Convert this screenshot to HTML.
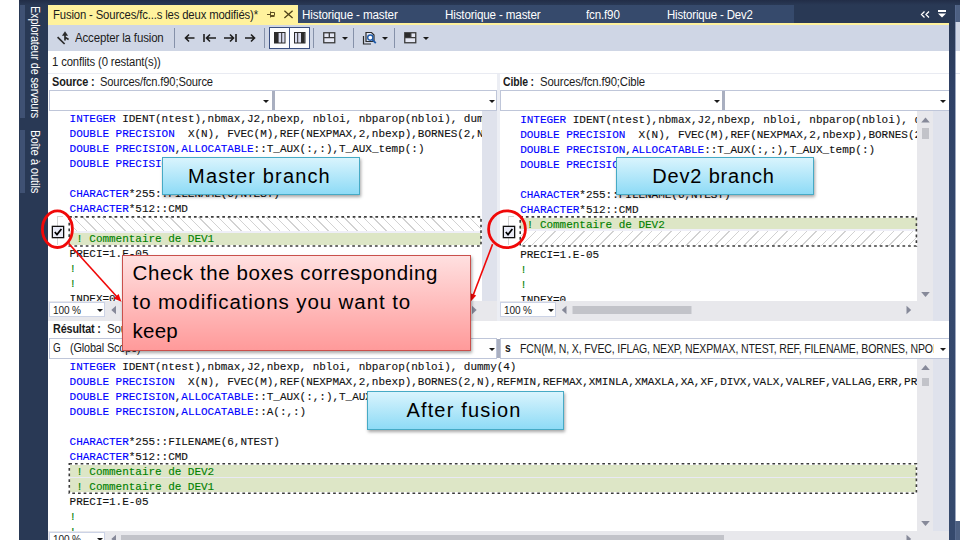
<!DOCTYPE html>
<html lang="fr">
<head>
<meta charset="utf-8">
<title>Fusion - Sources/fcn.f90</title>
<style>
*{box-sizing:border-box;margin:0;padding:0}
html,body{width:960px;height:540px;overflow:hidden;background:#fff}
body{position:relative;font-family:"Liberation Sans",sans-serif;font-size:11.5px;color:#1e1e1e}
.a{position:absolute}
.ui{position:absolute;white-space:nowrap;font-size:12px;line-height:14px;color:#1b1b1b}
.b{font-weight:bold}
.pane{position:absolute;overflow:hidden;background:#fff}
.cl{position:absolute;white-space:pre;font-family:"Liberation Mono",monospace;font-size:11px;line-height:15px;height:15px;letter-spacing:-0.03px;color:#111;-webkit-text-stroke:0.12px}
.cl b{font-weight:normal;color:#0000ff}
.cl i{font-style:normal;color:#008000}
.tabt{position:absolute;top:8px;white-space:nowrap;font-size:12px;line-height:14px;color:#fff}
.sep{position:absolute;top:28px;width:1px;height:20px;background:#8591a9}
.dd{position:absolute;width:0;height:0;border-left:3px solid transparent;border-right:3px solid transparent;border-top:3px solid #1b1b1b}
.sb{position:absolute;background:#e8e8ec}
.green{position:absolute;background:#dde6c6}
.note span{margin-left:-3px}
.note{position:absolute;display:flex;align-items:center;justify-content:center;font-size:20px;color:#000;border:1px solid #46aac5;background:linear-gradient(#d9f4fd,#8edbf6);box-shadow:1px 2px 3px rgba(0,0,0,.35);white-space:nowrap;padding-top:0.6px}
.vt{position:absolute;white-space:nowrap;color:#fff;font-size:12px;line-height:14px;transform-origin:0 0;transform:rotate(90deg)}
.rl{position:absolute;white-space:nowrap;font-size:20.5px;line-height:24px;color:#000}
</style>
</head>
<body>
<!-- left sidebar -->
<div class="a" style="left:19px;top:0;width:29px;height:540px;background:linear-gradient(#222d47 0,#293955 5px)"></div>
<div class="a" style="left:20px;top:5px;width:5px;height:113px;background:#3f5173"></div>
<div class="a" style="left:20px;top:130px;width:5px;height:63px;background:#3f5173"></div>
<div class="vt" style="letter-spacing:-0.150px;transform-origin:0 0;transform:rotate(90deg) scaleX(0.9035);left:42px;top:6px">Explorateur de serveurs</div>
<div class="vt" style="letter-spacing:-0.150px;transform-origin:0 0;transform:rotate(90deg) scaleX(0.9409);left:42px;top:130px">Boîte à outils</div>

<!-- tab strip -->
<div class="a" style="left:48px;top:0;width:901px;height:25px;background:linear-gradient(#222d47 0,#293955 5px)"></div>
<div class="a" style="left:949px;top:0;width:11px;height:5px;background:linear-gradient(#222d47 0,#293955 5px);z-index:1"></div>
<div class="a" style="left:298px;top:5px;width:496px;height:19px;background:#364a6c"></div>
<div class="a" style="left:48px;top:5px;width:250px;height:19px;background:#fff29d"></div>
<div class="a" style="left:48px;top:23px;width:901px;height:2px;background:#fff29d"></div>
<div class="tabt" style="letter-spacing:-0.150px;transform-origin:0 0;transform:scaleX(0.9419);left:52.5px;color:#1b1b1b">Fusion - Sources/fc...s les deux modifiés)*</div>
<svg class="a" style="left:266px;top:9px" width="30" height="12" viewBox="0 0 30 12">
 <g stroke="#5f5022" stroke-width="1" fill="none"><path d="M1 5.5H4.5M4.5 2.5V8.5M4.5 3.5H8.5V6.5H4.5M5 7.5H8.5"/></g>
 <path d="M18.4 1.8L26.6 9M26.6 1.8L18.4 9" stroke="#4f4218" stroke-width="1.3" fill="none"/>
</svg>
<div class="tabt" style="letter-spacing:-0.150px;transform-origin:0 0;transform:scaleX(0.9713);left:302.4px">Historique - master</div>
<div class="tabt" style="letter-spacing:-0.150px;transform-origin:0 0;transform:scaleX(0.9693);left:445px">Historique - master</div>
<div class="tabt" style="letter-spacing:-0.150px;transform-origin:0 0;transform:scaleX(0.9634);left:586.4px">fcn.f90</div>
<div class="tabt" style="letter-spacing:-0.150px;transform-origin:0 0;transform:scaleX(0.9506);left:666.6px">Historique - Dev2</div>
<svg class="a" style="left:918px;top:8px" width="32" height="12" viewBox="0 0 32 12">
 <path d="M6.5 3.5L3.5 6.5L6.5 9.5M11 3.5L8 6.5L11 9.5" stroke="#fff" stroke-width="1.3" fill="none"/>
 <path d="M20 2h8v2h-8zM20 5.5h8l-4 4z" fill="#fff"/>
</svg>

<!-- right strip -->
<div class="a" style="left:949px;top:0;width:11px;height:540px;background:linear-gradient(#293955 0,#293955 24px,#2f4166 90px,#34486c 240px,#35496d 540px)"></div>
<div class="a" style="left:955px;top:5px;width:5px;height:17px;background:#4d6082"></div>
<div class="a" style="left:955px;top:22px;width:5px;height:29px;background:#cfd6e5"></div>
<div class="a" style="left:955px;top:51px;width:5px;height:470px;background:#fff"></div>
<div class="a" style="left:955px;top:73px;width:5px;height:1px;background:#dfe3ec"></div>
<div class="a" style="left:955px;top:521px;width:5px;height:19px;background:#4d6082"></div>
<div class="a" style="left:955px;top:5px;width:1px;height:535px;background:#5d7096;opacity:.6"></div>

<!-- toolbar -->
<div class="a" style="left:48px;top:25px;width:901px;height:26px;background:#cfd6e5"></div>
<svg class="a" style="left:56px;top:30px" width="16" height="16" viewBox="0 0 16 16">
 <path d="M1.6 7.2L8.6 14" stroke="#2b2b2b" stroke-width="1.7" fill="none"/>
 <path d="M9 10.5V3.5M9 7.2L12.6 9.4" stroke="#2b2b2b" stroke-width="1.7" fill="none"/>
 <path d="M5.9 5.8L9 1.2L12.1 5.8z" fill="#2b2b2b"/>
</svg>
<div class="ui" style="letter-spacing:-0.150px;transform-origin:0 0;transform:scaleX(0.9559);left:74.7px;top:31.2px">Accepter la fusion</div>
<div class="sep" style="left:174px"></div>
<svg class="a" style="left:183px;top:32px" width="76" height="12" viewBox="0 0 76 12">
 <g stroke="#1e1e1e" stroke-width="1.6" fill="none">
  <path d="M11.5 6H3M6 2.5L2.5 6L6 9.5"/>
  <path d="M21 2v8M33 6H24M27 2.5L23.5 6L27 9.5"/>
  <path d="M41 6h9M47 2.5L50.5 6L47 9.5M53 2v8"/>
  <path d="M62 6h9M68 2.5L71.5 6L68 9.5"/>
 </g>
</svg>
<div class="sep" style="left:264px"></div>
<div class="a" style="left:269px;top:27px;width:21px;height:22px;border:1px solid #3a4f80;background:#fbfcfe"></div>
<div class="a" style="left:289px;top:27px;width:21px;height:22px;border:1px solid #3a4f80;background:#fbfcfe"></div>
<svg class="a" style="left:274px;top:32px" width="34" height="12" viewBox="0 0 34 12">
 <rect x="0.5" y="0.5" width="10.5" height="10.5" fill="#d9dcef" stroke="#2b2b2b"/><rect x="1" y="1" width="3.6" height="10" fill="#2b2b2b"/><path d="M7.7 1v10" stroke="#2b2b2b"/>
 <rect x="20.5" y="0.5" width="10.5" height="10.5" fill="#d9dcef" stroke="#2b2b2b"/><rect x="27" y="1" width="3.6" height="10" fill="#2b2b2b"/><path d="M23.7 1v10" stroke="#2b2b2b"/>
</svg>
<div class="sep" style="left:313px"></div>
<svg class="a" style="left:323px;top:32px" width="13" height="12" viewBox="0 0 13 12">
 <rect x="0.75" y="0.75" width="11" height="10" fill="#e4e7f3" stroke="#3b3b3b" stroke-width="1.3"/><path d="M1 5.6h11M6.3 1v4.6" stroke="#3b3b3b" stroke-width="1.3"/>
</svg>
<div class="dd" style="left:342px;top:37px"></div>
<div class="sep" style="left:353px"></div>
<svg class="a" style="left:362px;top:30px" width="16" height="16" viewBox="0 0 16 16">
 <path d="M1.5 6v8h7.5" stroke="#2b2b2b" stroke-width="1.2" fill="none"/><path d="M4 2.5h5.5l2.5 2.5v6.5h-8z" fill="#e4e7f3" stroke="#2b2b2b" stroke-width="1.2"/>
 <circle cx="8.3" cy="7.6" r="2.6" fill="#fff" stroke="#1e5aa8" stroke-width="1.4"/><path d="M10.3 9.6L13.8 13.2" stroke="#1e5aa8" stroke-width="1.8"/>
</svg>
<div class="dd" style="left:382px;top:37px"></div>
<div class="sep" style="left:394px"></div>
<svg class="a" style="left:404px;top:32px" width="13" height="12" viewBox="0 0 13 12">
 <rect x="0.75" y="0.75" width="11" height="10" fill="#e4e7f3" stroke="#3b3b3b" stroke-width="1.3"/><rect x="1" y="1" width="5.8" height="4.6" fill="#2b2b2b"/><path d="M1 5.6h11M6.8 1v4.6" stroke="#3b3b3b" stroke-width="1.3"/>
</svg>
<div class="dd" style="left:423px;top:37px"></div>

<!-- conflicts row -->
<div class="ui" style="letter-spacing:-0.150px;transform-origin:0 0;transform:scaleX(0.9401);left:52.1px;top:55.1px">1 conflits (0 restant(s))</div>
<div class="a" style="left:48px;top:73px;width:901px;height:1px;background:#e9ebf2"></div>

<!-- source / cible headers -->
<div class="ui b" style="letter-spacing:-0.150px;transform-origin:0 0;transform:scaleX(0.9078);left:52.1px;top:74.7px">Source :</div>
<div class="ui" style="letter-spacing:-0.150px;transform-origin:0 0;transform:scaleX(0.9297);left:100.4px;top:74.7px">Sources/fcn.f90;Source</div>
<div class="ui b" style="letter-spacing:-0.150px;transform-origin:0 0;transform:scaleX(0.8674);left:502.9px;top:74.7px">Cible :</div>
<div class="ui" style="letter-spacing:-0.150px;transform-origin:0 0;transform:scaleX(0.9467);left:540px;top:74.7px">Sources/fcn.f90;Cible</div>
<div class="a" style="left:497px;top:74px;width:3px;height:247px;background:#eceef4"></div>

<!-- dropdown rows top -->
<div class="a" style="left:49px;top:90px;width:448px;height:21px;border:1px solid #bfc6d9;background:#fff"></div>
<div class="a" style="left:272px;top:91px;width:3px;height:19px;background:#a9afc0"></div>
<div class="dd" style="left:263px;top:100px"></div>
<div class="dd" style="left:488.5px;top:100px"></div>
<div class="a" style="left:500px;top:90px;width:449px;height:21px;border:1px solid #bfc6d9;border-right:none;background:#fff"></div>
<div class="a" style="left:722px;top:91px;width:3px;height:19px;background:#a9afc0"></div>
<div class="dd" style="left:714px;top:100px"></div>
<div class="dd" style="left:939.5px;top:100px"></div>

<!-- SOURCE PANE -->
<div class="a" style="left:482px;top:111px;width:15px;height:190px;background:#dfe2ec"></div>
<div class="pane" style="left:48px;top:111px;width:434px;height:190px">
 <div class="a" style="left:21px;top:106px;width:412px;height:15px;background:repeating-linear-gradient(45deg,#fff 0,#fff 5.94px,#d2d2d2 5.94px,#d2d2d2 6.84px)"></div>
 <div class="a" style="left:21px;top:120.3px;width:412px;height:2px;background:#efeff8"></div>
 <div class="green" style="left:21px;top:122.2px;width:412px;height:12px"></div>
 <div class="cl" style="left:21.6px;top:1.3px"><b>INTEGER</b> IDENT(ntest),nbmax,J2,nbexp, nbloi, nbparop(nbloi), dummy(4)</div>
 <div class="cl" style="left:21.6px;top:16.3px"><b>DOUBLE PRECISION</b>  X(N), FVEC(M),REF(NEXPMAX,2,nbexp),BORNES(2,N),REFMIN</div>
 <div class="cl" style="left:21.6px;top:31.3px"><b>DOUBLE PRECISION</b>,<b>ALLOCATABLE</b>::T_AUX(:,:),T_AUX_temp(:)</div>
 <div class="cl" style="left:21.6px;top:46.3px"><b>DOUBLE PRECISION</b>,<b>ALLOCATABLE</b>::A(:,:)</div>
 <div class="cl" style="left:21.6px;top:76.3px"><b>CHARACTER</b>*255::FILENAME(6,NTEST)</div>
 <div class="cl" style="left:21.6px;top:91.3px"><b>CHARACTER</b>*512::CMD</div>
 <div class="cl" style="left:21.6px;top:121.3px"><i> ! Commentaire de DEV1</i></div>
 <div class="cl" style="left:21.6px;top:136.3px">PRECI=1.E-05</div>
 <div class="cl" style="left:21.6px;top:151.3px"><i>!</i></div>
 <div class="cl" style="left:21.6px;top:166.3px"><i>!</i></div>
 <div class="cl" style="left:21.6px;top:181.3px">INDEX=0</div>
</div>

<!-- CIBLE PANE -->
<div class="pane" style="left:500px;top:111px;width:417px;height:190px">
 <div class="a" style="left:20px;top:120px;width:397px;height:15px;background:repeating-linear-gradient(-45deg,#fff 0,#fff 5.94px,#d2d2d2 5.94px,#d2d2d2 6.84px)"></div>
 <div class="a" style="left:20px;top:118px;width:397px;height:2px;background:#efeff8"></div>
 <div class="green" style="left:20px;top:107.3px;width:397px;height:11px"></div>
 <div class="cl" style="left:20.2px;top:1.6px"><b>INTEGER</b> IDENT(ntest),nbmax,J2,nbexp, nbloi, nbparop(nbloi), dummy(4)</div>
 <div class="cl" style="left:20.2px;top:16.6px"><b>DOUBLE PRECISION</b>  X(N), FVEC(M),REF(NEXPMAX,2,nbexp),BORNES(2,N),REFMIN</div>
 <div class="cl" style="left:20.2px;top:31.6px"><b>DOUBLE PRECISION</b>,<b>ALLOCATABLE</b>::T_AUX(:,:),T_AUX_temp(:)</div>
 <div class="cl" style="left:20.2px;top:46.6px"><b>DOUBLE PRECISION</b>,<b>ALLOCATABLE</b>::A(:,:)</div>
 <div class="cl" style="left:20.2px;top:76.6px"><b>CHARACTER</b>*255::FILENAME(6,NTEST)</div>
 <div class="cl" style="left:20.2px;top:91.6px"><b>CHARACTER</b>*512::CMD</div>
 <div class="cl" style="left:20.2px;top:106.6px"><i> ! Commentaire de DEV2</i></div>
 <div class="cl" style="left:20.2px;top:136.6px">PRECI=1.E-05</div>
 <div class="cl" style="left:20.2px;top:151.6px"><i>!</i></div>
 <div class="cl" style="left:20.2px;top:166.6px"><i>!</i></div>
 <div class="cl" style="left:20.2px;top:181.6px">INDEX=0</div>
</div>
<div class="sb" style="left:917px;top:111px;width:16px;height:190px"></div>
<div class="a" style="left:933px;top:111px;width:16px;height:420px;background:#dfe2ec"></div>

<!-- RESULT PANE -->
<div class="pane" style="left:48px;top:359px;width:869px;height:172px">
 <div class="green" style="left:22px;top:106.3px;width:846px;height:26.8px"></div>
 <div class="a" style="left:22px;top:117.8px;width:846px;height:1.7px;background:#e9e9f4"></div>
 <div class="cl" style="left:21.6px;top:0.6px"><b>INTEGER</b> IDENT(ntest),nbmax,J2,nbexp, nbloi, nbparop(nbloi), dummy(4)</div>
 <div class="cl" style="left:21.6px;top:15.6px"><b>DOUBLE PRECISION</b>  X(N), FVEC(M),REF(NEXPMAX,2,nbexp),BORNES(2,N),REFMIN,REFMAX,XMINLA,XMAXLA,XA,XF,DIVX,VALX,VALREF,VALLAG,ERR,PRECI</div>
 <div class="cl" style="left:21.6px;top:30.6px"><b>DOUBLE PRECISION</b>,<b>ALLOCATABLE</b>::T_AUX(:,:),T_AUX_temp(:)</div>
 <div class="cl" style="left:21.6px;top:45.6px"><b>DOUBLE PRECISION</b>,<b>ALLOCATABLE</b>::A(:,:)</div>
 <div class="cl" style="left:21.6px;top:75.6px"><b>CHARACTER</b>*255::FILENAME(6,NTEST)</div>
 <div class="cl" style="left:21.6px;top:90.6px"><b>CHARACTER</b>*512::CMD</div>
 <div class="cl" style="left:21.6px;top:105.6px"><i> ! Commentaire de DEV2</i></div>
 <div class="cl" style="left:21.6px;top:120.6px"><i> ! Commentaire de DEV1</i></div>
 <div class="cl" style="left:21.6px;top:135.6px">PRECI=1.E-05</div>
 <div class="cl" style="left:21.6px;top:150.6px"><i>!</i></div>
 <div class="cl" style="left:21.6px;top:165.6px"><i>!</i></div>
</div>
<div class="sb" style="left:917px;top:359px;width:16px;height:172px"></div>

<!-- vertical scrollbar glyphs -->
<svg class="a" style="left:918px;top:111px" width="15" height="191" viewBox="0 0 15 191">
 <path d="M3.2 11.5L7.5 6.5L11.8 11.5z" fill="#868999"/>
 <rect x="4" y="17" width="7" height="11" fill="#c2c3c9"/>
 <path d="M3.2 181L7.5 186L11.8 181z" fill="#868999"/>
</svg>
<svg class="a" style="left:918px;top:359px" width="15" height="172" viewBox="0 0 15 172">
 <path d="M3.2 11L7.5 6L11.8 11z" fill="#868999"/>
 <rect x="4" y="19" width="7" height="8" fill="#c2c3c9"/>
 <path d="M3.2 162L7.5 167L11.8 162z" fill="#868999"/>
</svg>

<!-- horizontal scrollbars (top panes) -->
<div class="sb" style="left:48px;top:301px;width:449px;height:20px"></div>
<div class="sb" style="left:500px;top:301px;width:433px;height:20px"></div>
<div class="a" style="left:49px;top:302.4px;width:56px;height:15px;background:#fff;border:1px solid #ccd3e6"></div>
<div class="ui" style="letter-spacing:-0.150px;transform-origin:0 0;transform:scaleX(0.9680);font-size:10.4px;left:53px;top:303.6px">100 %</div>
<div class="dd" style="left:96.7px;top:309px"></div>
<svg class="a" style="left:108px;top:303px" width="380" height="14" viewBox="0 0 380 14">
 <path d="M8 2.8L3.3 7L8 11.2z" fill="#868999"/>
 <path d="M364 2.8L368.7 7L364 11.2z" fill="#868999"/>
</svg>
<div class="a" style="left:500px;top:302.4px;width:56px;height:15px;background:#fff;border:1px solid #ccd3e6"></div>
<div class="ui" style="letter-spacing:-0.150px;transform-origin:0 0;transform:scaleX(0.9680);font-size:10.4px;left:504.2px;top:303.6px">100 %</div>
<div class="dd" style="left:547.5px;top:309px"></div>
<svg class="a" style="left:558px;top:303px" width="360" height="14" viewBox="0 0 360 14">
 <path d="M8.5 2.8L3.8 7L8.5 11.2z" fill="#868999"/>
 <rect x="14.5" y="3" width="119" height="8" fill="#c2c3c9"/>
 <path d="M348.5 2.8L353.2 7L348.5 11.2z" fill="#868999"/>
</svg>

<!-- result header -->
<div class="a" style="left:48px;top:321px;width:901px;height:18px;background:#fff"></div>
<div class="ui b" style="letter-spacing:-0.150px;transform-origin:0 0;transform:scaleX(0.8987);left:53px;top:322.1px">Résultat :</div>
<div class="ui" style="letter-spacing:-0.150px;transform-origin:0 0;transform:scaleX(0.9596);left:106.7px;top:322.1px">Sources/fcn.f90;Résultat</div>
<div class="a" style="left:49px;top:338px;width:448px;height:21px;border:1px solid #bfc6d9;background:#fff"></div>
<div class="a" style="left:500px;top:338px;width:449px;height:21px;border:1px solid #bfc6d9;border-right:none;background:#fff"></div>
<div class="a" style="left:497px;top:339px;width:3px;height:19px;background:#a9afc0"></div>
<div class="ui" style="letter-spacing:-0.150px;transform-origin:0 0;transform:scaleX(0.8266);left:53.3px;top:341.3px">G</div>
<div class="ui" style="letter-spacing:-0.150px;transform-origin:0 0;transform:scaleX(0.9045);left:69.8px;top:341.3px">(Global Scope)</div>
<div class="dd" style="left:488.5px;top:348px"></div>
<div class="ui b" style="letter-spacing:-0.150px;transform-origin:0 0;transform:scaleX(0.8566);left:504.5px;top:341.3px">s</div>
<div class="a" style="left:520px;top:339px;width:414px;height:19px;overflow:hidden"><div class="ui" style="letter-spacing:-0.150px;transform-origin:0 0;transform:scaleX(0.8758);left:0;top:2.5px">FCN(M, N, X, FVEC, IFLAG, NEXP, NEXPMAX, NTEST, REF, FILENAME, BORNES, NPOINTS)</div></div>
<div class="dd" style="left:939.5px;top:348px"></div>

<!-- bottom horizontal scrollbar -->
<div class="sb" style="left:48px;top:531px;width:901px;height:9px"></div>
<div class="a" style="left:49px;top:531.6px;width:56px;height:15px;background:#fff;border:1px solid #ccd3e6"></div>
<div class="ui" style="letter-spacing:-0.150px;transform-origin:0 0;transform:scaleX(0.9680);font-size:10.4px;left:53px;top:532.6px">100 %</div>
<div class="dd" style="left:96.7px;top:538px"></div>
<svg class="a" style="left:108px;top:532px" width="810" height="8" viewBox="0 0 810 8">
 <path d="M8 2.8L3.3 7L8 11.2z" fill="#868999"/>
 <rect x="13" y="3" width="603" height="8" fill="#c2c3c9"/>
 <path d="M798.5 2.8L803.2 7L798.5 11.2z" fill="#868999"/>
</svg>

<!-- check boxes -->
<div class="a" style="left:57px;top:216px;width:1px;height:29px;background:#d4d4d4"></div>
<div class="a" style="left:57px;top:216px;width:6px;height:1px;background:#d4d4d4"></div>
<div class="a" style="left:508px;top:216px;width:1px;height:29px;background:#d4d4d4"></div>
<div class="a" style="left:508px;top:216px;width:6px;height:1px;background:#d4d4d4"></div>
<svg class="a" style="left:51px;top:225px" width="14" height="14" viewBox="0 0 14 14">
 <rect x="1.35" y="1.35" width="11.3" height="11.3" fill="#e9ebf6" stroke="#111" stroke-width="1.3"/>
 <path d="M3.8 7L6 9.6L10.4 4" stroke="#000" stroke-width="1.7" fill="none"/>
</svg>
<svg class="a" style="left:502px;top:225px" width="14" height="14" viewBox="0 0 14 14">
 <rect x="1.35" y="1.35" width="11.3" height="11.3" fill="#e9ebf6" stroke="#111" stroke-width="1.3"/>
 <path d="M3.8 7L6 9.6L10.4 4" stroke="#000" stroke-width="1.7" fill="none"/>
</svg>

<!-- annotations -->
<svg class="a" style="left:0;top:0" width="960" height="540" viewBox="0 0 960 540">
 <g fill="none" stroke="#3c3c3c" stroke-width="1.6" stroke-dasharray="2.7 2.97">
  <rect x="69.2" y="216.85" width="411.8" height="29.15"/>
  <rect x="520.2" y="216.85" width="396.2" height="29.15"/>
  <rect x="69.3" y="463.8" width="847.1" height="29.5"/>
 </g>
 <g fill="none" stroke="#f00808" stroke-width="2.8">
  <ellipse cx="57.4" cy="229.2" rx="15" ry="18.3"/>
  <circle cx="507" cy="229.2" r="18.4"/>
 </g>
 <g stroke="#f00808" stroke-width="1.6" fill="#f00808">
  <path d="M68.6 243.4L118 298" fill="none"/>
  <path d="M121.5 301.8L113.6 298.6L118.6 294z" stroke="none"/>
  <path d="M492.6 244.1L472.5 297" fill="none"/>
  <path d="M470.7 301.5L469.8 293L476.2 295.4z" stroke="none"/>
 </g>
</svg>
<div class="note" style="left:162px;top:157px;width:198px;height:38px"><span style="letter-spacing:1.150px;">Master branch</span></div>
<div class="note" style="left:616px;top:157px;width:198px;height:38px"><span style="letter-spacing:0.818px;">Dev2 branch</span></div>
<div class="note" style="left:367px;top:391px;width:197px;height:39px"><span style="letter-spacing:1.169px;">After fusion</span></div>
<div class="a" style="left:122.3px;top:254.9px;width:348.7px;height:96.2px;border:1px solid #c9504c;background:linear-gradient(#ffe0e0,#ff9a9a);box-shadow:1px 2px 3px rgba(0,0,0,.35)"></div>
<div class="rl" style="letter-spacing:0.586px;left:132.6px;top:261px">Check the boxes corresponding</div>
<div class="rl" style="letter-spacing:0.912px;left:132.6px;top:290px">to modifications you want to</div>
<div class="rl" style="letter-spacing:0.208px;left:132.6px;top:318.5px">keep</div>

</body>
</html>
